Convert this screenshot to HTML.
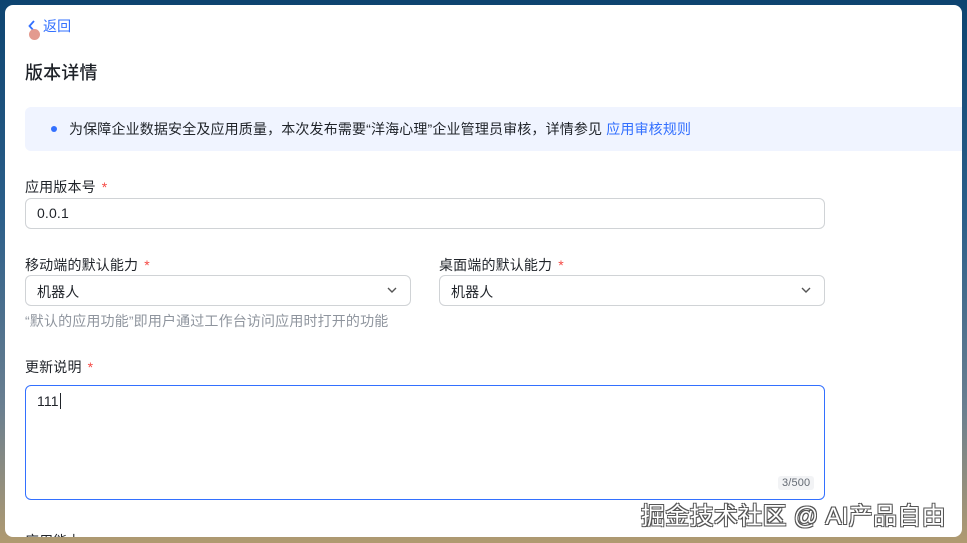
<!DOCTYPE html>
<html><head><meta charset="utf-8"><style>
*{box-sizing:border-box;margin:0;padding:0}
body{width:967px;height:543px;overflow:hidden;position:relative;font-family:"Liberation Sans","Noto Sans CJK SC",sans-serif;background:linear-gradient(180deg,#0d4470 0%,#2c5f8a 40%,#6a7f90 75%,#b09a70 100%)}
.card{position:absolute;left:5px;top:5px;width:957px;height:532px;background:#fff;border-radius:8px;overflow:hidden;letter-spacing:0.15px}
.abs{position:absolute}
.lbl{font-size:14px;color:#1f2329}
.req{color:#f54a45;margin-left:6px}
.inp{position:absolute;border:1px solid #d0d3d6;border-radius:6px;height:31px;font-size:14px;color:#1f2329;padding:6px 11px}
.chev{position:absolute;right:12px;top:8px}
</style></head><body>
<div class="card">
<svg class="abs" style="left:22px;top:14px" width="10" height="14" viewBox="0 0 10 14"><path d="M7 2 L2.5 7 L7 12" fill="none" stroke="#3370ff" stroke-width="1.8"/></svg>
<div class="abs" style="left:24px;top:24px;width:11px;height:11px;border-radius:50%;background:#e39a8f"></div>
<div class="abs" style="left:38px;top:11px;font-size:14px;color:#3370ff">返回</div>
<div class="abs" style="left:20px;top:54px;font-size:18px;color:#1f2329;font-weight:500">版本详情</div>
<div class="abs" style="left:20px;top:102px;width:945px;height:44px;background:#f0f4ff;border-radius:6px"></div>
<div class="abs" style="left:46px;top:121px;width:6px;height:6px;border-radius:50%;background:#3370ff"></div>
<div class="abs" style="left:64px;top:114px;font-size:14px;color:#1f2329">为保障企业数据安全及应用质量，本次发布需要“洋海心理”企业管理员审核，详情参见 <span style="color:#3370ff">应用审核规则</span></div>
<div class="abs lbl" style="left:20px;top:172px">应用版本号<span class="req">*</span></div>
<div class="inp" style="left:20px;top:193px;width:800px">0.0.1</div>
<div class="abs lbl" style="left:20px;top:250px">移动端的默认能力<span class="req">*</span></div>
<div class="inp" style="left:20px;top:270px;width:386px">机器人<svg class="chev" width="12" height="12" viewBox="0 0 12 12"><path d="M2 4 L6 8 L10 4" fill="none" stroke="#555" stroke-width="1.4"/></svg></div>
<div class="abs lbl" style="left:434px;top:250px">桌面端的默认能力<span class="req">*</span></div>
<div class="inp" style="left:434px;top:270px;width:386px">机器人<svg class="chev" width="12" height="12" viewBox="0 0 12 12"><path d="M2 4 L6 8 L10 4" fill="none" stroke="#555" stroke-width="1.4"/></svg></div>
<div class="abs" style="left:20px;top:306px;font-size:14px;color:#8f959e">“默认的应用功能”即用户通过工作台访问应用时打开的功能</div>
<div class="abs lbl" style="left:20px;top:352px">更新说明<span class="req">*</span></div>
<div class="abs" style="left:20px;top:380px;width:800px;height:115px;border:1px solid #3370ff;border-radius:6px;font-size:14px;color:#1f2329;padding:7px 11px">111<span style="border-left:1px solid #1f2329;margin-left:1px"></span></div>
<div class="abs" style="left:773px;top:471px;font-size:11px;color:#646a73;background:#f2f3f5;border-radius:3px;padding:1px 4px">3/500</div>
<div class="abs lbl" style="left:20px;top:526px">应用能力</div>
<div class="abs" style="left:636px;top:491px;font-size:24px;letter-spacing:0.3px;color:#fff;text-shadow:1px 1px 0 #555,-1px -1px 0 #555,1px -1px 0 #555,-1px 1px 0 #555">掘金技术社区 @ AI产品自由</div>
</div>
</body></html>
